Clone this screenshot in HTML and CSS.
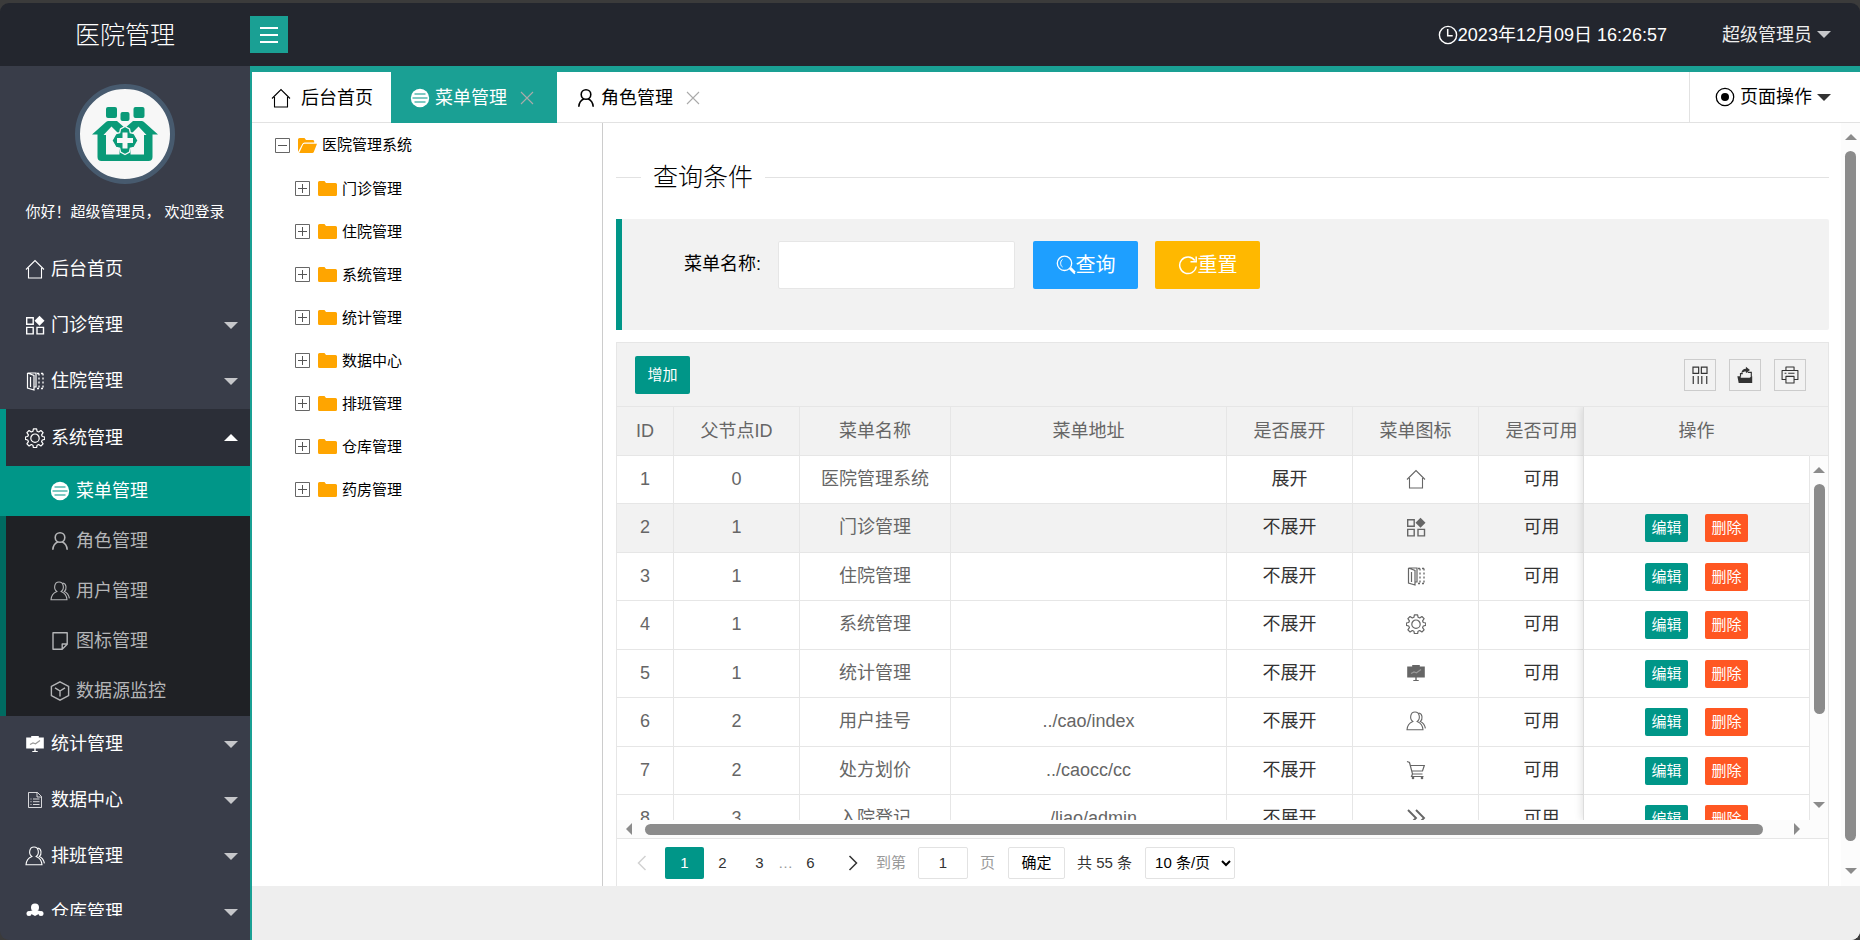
FILE: index.html
```html
<!DOCTYPE html>
<html lang="zh-CN">
<head>
<meta charset="utf-8">
<title>医院管理</title>
<link rel="stylesheet" href="styles.css">
</head>
<body>
<svg class="sprite" aria-hidden="true">
  <symbol id="i-home" viewBox="0 0 20 20"><path d="M1 10.5 10 1.5l9 9M3.500 9v10h13V9" fill="none" stroke="currentColor" stroke-width="1.100"/></symbol>
  <symbol id="i-grid" viewBox="0 0 20 20"><path d="M1.700 2.700h6.500v6.500H1.700zM1.700 12.400h6.500v6.500H1.700zM12 12.400h6.500v6.500H12z" fill="none" stroke="currentColor" stroke-width="1.400"/><path d="m14.500.8 5 5-5 5-5-5z" fill="currentColor"/></symbol>
  <symbol id="i-door" viewBox="0 0 20 20"><path d="M2.500 2h8.500v2.500M2.500 2v15l6.500 2V4.500L2.500 2M11 7v9H9M5.500 6v10M11 4.500v12" fill="none" stroke="currentColor" stroke-width="1.200"/><path d="M14 2.500v16M18 2.500v16M12 2.500h6M12 17.500h6" fill="none" stroke="currentColor" stroke-width="1.300" stroke-dasharray="2 2"/></symbol>
  <symbol id="i-gear" viewBox="0 0 20 20"><path d="M8.400.8h3.200l.5 2.500 1.600.7 2.200-1.500 2.200 2.200-1.500 2.200.7 1.600 2.400.5v2.400l-2.400.6-.7 1.600 1.500 2.200-2.200 2.200-2.200-1.500-1.600.7-.5 2.500H8.400l-.5-2.500-1.600-.7-2.200 1.500-2.200-2.200 1.500-2.200-.7-1.600-2.300-.6V9l2.300-.5.7-1.600L1.900 4.700l2.200-2.200L6.300 4l1.600-.7z" fill="none" stroke="currentColor" stroke-width="1.200" stroke-linejoin="round"/><circle cx="10" cy="10.200" r="4.200" fill="none" stroke="currentColor" stroke-width="1.200"/></symbol>
  <symbol id="i-menu" viewBox="0 0 20 20"><circle cx="10" cy="10" r="9.200" fill="currentColor"/><path d="M4.500 6h11M2.500 10h15M4.500 14h11" stroke="#009688" stroke-width="1.100"/></symbol>
  <symbol id="i-role" viewBox="0 0 20 20"><circle cx="10" cy="6.500" r="4.800" fill="none" stroke="currentColor" stroke-width="1.600"/><path d="M8 10.800c-3 1.400-5 4-5.200 8M12 10.800c3 1.400 5 4 5.200 8" fill="none" stroke="currentColor" stroke-width="1.600"/></symbol>
  <symbol id="i-user" viewBox="0 0 20 20"><path d="M6.800 10.400C3.400 8 4 1 9 1s5.600 7 2.200 9.400c3.200 1.400 5.600 4 5.800 8.400H1c.2-4.400 2.600-7 5.800-8.400zM12.800 2c4 .6 4 6.500 1.600 8.400 2.600 1.200 4.400 3.600 5 7" fill="none" stroke="currentColor" stroke-width="1.100"/></symbol>
  <symbol id="i-note" viewBox="0 0 20 20"><path d="M3 1.700h14.200v11.500l-5 5.100H3zM17 13h-4.800v5" fill="none" stroke="currentColor" stroke-width="1.400" stroke-linejoin="round"/></symbol>
  <symbol id="i-cube" viewBox="0 0 20 20"><path d="m10 .9 8.600 4.600v9L10 19.200 1.400 14.500v-9zM5 6.800l5 3.200 5-3.200M10 10v5.500" fill="none" stroke="currentColor" stroke-width="1.400"/></symbol>
  <symbol id="i-board" viewBox="0 0 20 20"><path d="M1.200 3.500h5V2h7.600v1.500h5v11H1.200zM9.300 14.500h1.400V17h2v1H7.300v-1h2z" fill="currentColor"/><path class="board-line" d="m5 10.500 3-1.500 2.500.8L15 6.500" fill="none" stroke-width="1.200"/></symbol>
  <symbol id="i-doc" viewBox="0 0 20 20"><path d="M3.500 2.500h9l4 4v11h-13zM12 2.500V7h4.500M5.500 9h1M8 9h6.500M5.500 11.700h1M8 11.700h6.500M5.500 14.500h1M8 14.500h6.500" fill="none" stroke="currentColor" stroke-width=".8"/></symbol>
  <symbol id="i-team" viewBox="0 0 20 20"><circle cx="10" cy="5.500" r="4" fill="currentColor"/><circle cx="4" cy="11.500" r="2.500" fill="currentColor"/><circle cx="16" cy="11.500" r="2.500" fill="currentColor"/><path d="M3.500 10.500c1-3 12-3 13 0L10 14zM.8 18c0-5 6-5 7 0zM12 18c1-5 7-5 7.200 0zM7.500 14.500h5V18h-5z" fill="currentColor"/></symbol>
  <symbol id="i-cart" viewBox="0 0 20 20"><path d="M1 1.500 3.500 2.500l3 11.500h10M4.300 5.500h14L16.500 11H6M6.500 14l-1 2.500h12" fill="none" stroke="currentColor" stroke-width="1.200"/><circle cx="7" cy="18" r="1.300" fill="currentColor"/><circle cx="16" cy="18" r="1.300" fill="currentColor"/></symbol>
  <symbol id="i-next" viewBox="0 0 20 20"><path d="m2 2 8 8-8 8M10 2l8 8-8 8" fill="none" stroke="currentColor" stroke-width="1.900"/></symbol>
  <symbol id="i-clock" viewBox="0 0 20 20"><circle cx="10" cy="10" r="8.600" fill="none" stroke="currentColor" stroke-width="1.400"/><path d="M9.700 4v6.700h5" fill="none" stroke="currentColor" stroke-width="1.500"/></symbol>
  <symbol id="i-target" viewBox="0 0 20 20"><circle cx="10" cy="10" r="8.700" fill="none" stroke="currentColor" stroke-width="1.300"/><circle cx="10" cy="10" r="4" fill="currentColor"/></symbol>
  <symbol id="i-search" viewBox="0 0 20 20"><circle cx="8.500" cy="8.300" r="7.200" fill="none" stroke="currentColor" stroke-width="1.300"/><path d="M6.500 4.500c-2.500 1.500-2.500 6 0 7.500" fill="none" stroke="currentColor"/><path d="m13.200 13.200 5.600 5.600M14.600 12.600l4.600 4.600" fill="none" stroke="currentColor" stroke-width="1.500"/></symbol>
  <symbol id="i-reset" viewBox="0 0 20 20"><path d="M18.200 11.500A8.300 8.300 0 1 1 16.800 5.500M18.200 1.500v5.300h-5.700" fill="none" stroke="currentColor" stroke-width="1.500"/></symbol>
  <symbol id="i-close" viewBox="0 0 14 14"><path d="m1 1 12 12M13 1 1 13" fill="none" stroke="currentColor" stroke-width="1.100"/></symbol>
  <symbol id="i-cols" viewBox="0 0 20 20"><path d="M2.200 1.200h6.300v7H2.200zM11.500 1.200h6.300v7h-6.300zM2.500 11v9M8 11v9M12 11v9M17.500 11v9" fill="none" stroke="currentColor" stroke-width="1.300"/></symbol>
  <symbol id="i-export" viewBox="0 0 20 20"><path d="M1.500 11.500h3l1 1.500h9.500l3-1.500v7.500H3z" fill="currentColor"/><path d="M5 12V8.500h2.500M13 7h4v6" fill="none" stroke="currentColor" stroke-width="1.300"/><path d="M6 8c0-3 2-5 5-5V.8l4.500 3.700L11 8V6C9 6 7.500 6.500 6 8z" fill="currentColor"/></symbol>
  <symbol id="i-print" viewBox="0 0 20 20"><path d="M5.500 5V1.200h9V5M5.500 15H1.200V5h17.600v10h-4.300M5.500 11.500h9v7.300h-9zM4 8h2M8 8h7" fill="none" stroke="currentColor" stroke-width="1.200" stroke-linejoin="round"/></symbol>
  <symbol id="i-plus" viewBox="0 0 15 15"><path d="M.5.500h14v14H.5z" fill="none" stroke="#666"/><path d="M3 7.500h9M7.500 3v9" stroke="#555"/></symbol>
  <symbol id="i-minus" viewBox="0 0 15 15"><path d="M.5.500h14v14H.5z" fill="none" stroke="#666"/><path d="M3 7.500h9" stroke="#555"/></symbol>
  <symbol id="i-folder" viewBox="0 0 19 15"><path d="M0 1.500Q0 0 1.500 0H6.500L8 2h9.500Q19 2 19 3.500v10q0 1.500-1.500 1.500h-16Q0 15 0 13.500z" fill="#ffa500"/></symbol>
  <symbol id="i-open" viewBox="0 0 19 15"><path d="M0 14V1.500Q0 0 1.500 0H6.500L8 2h7q1.200 0 1.200 1.500V4.500H6.500Q5 4.500 4.300 6z" fill="#ffa500"/><path d="M1.200 15 5 6.700q.4-1 1.500-1H19L15.800 14q-.4 1-1.500 1z" fill="#ffa500"/></symbol>
  <symbol id="i-left" viewBox="0 0 10 16"><path d="M8.500 1 1.500 8l7 7" fill="none" stroke="currentColor" stroke-width="1.500"/></symbol>
  <symbol id="i-right" viewBox="0 0 10 16"><path d="m1.500 1 7 7-7 7" fill="none" stroke="currentColor" stroke-width="1.500"/></symbol>
</svg>
<div class="app">
  <header class="header">
    <h1 class="logo">医院管理</h1>
    <button class="burger" type="button" aria-label="收起菜单"><span></span><span></span><span></span></button>
    <div class="clock"><svg class="icon"><use href="#i-clock"/></svg><time>2023年12月09日 16:26:57</time></div>
    <button class="account" type="button">超级管理员<span class="caret"></span></button>
  </header>
  <div class="body">
    <aside class="side">
      <div class="profile">
        <svg class="avatar" viewBox="0 0 100 100" role="img" aria-label="头像">
          <circle cx="50" cy="50" r="47.500" fill="#f7f7f7" stroke="#475a6e" stroke-width="5"/>
          <g fill="#0a9a78">
            <rect x="31" y="23" width="11" height="11" rx="2"/><rect x="58.500" y="23" width="11" height="11" rx="2"/><rect x="45.500" y="28" width="9" height="9" rx="2"/>
            <path d="M17 50.500 31 38q1-1 2.500-1H42l8 7 8-7h8.500q1.500 0 2.500 1l14 12.500h-5.500V73q0 4-4 4h-47q-4 0-4-4V50.500z"/>
          </g>
          <path d="M31 70.500V51h-2.500l8-8.500 7 7L38 56.500l6.500 7v7zM69 70.500V51h2.500l-8-8.500-7 7 5.500 7-6.500 7v7z" fill="#f7f7f7"/>
          <path d="m50 42.500 4.500 2.500.8 3.700 3.700.8 4 7-4 7-3.700.8-.8 3.700-4.500 2.500-4.500-2.500-.8-3.700-3.700-.8-4-7 4-7 3.700-.8.8-3.700z" fill="#0a9a78" stroke="#f7f7f7" stroke-width="1.300"/>
          <path d="M47.500 48.500h5V54H58v5h-5.500v5.500h-5V59H42v-5h5.500z" fill="#f7f7f7"/>
        </svg>
        <p class="greet">你好！超级管理员， 欢迎登录</p>
      </div>
      <nav class="nav">
        <a class="item" href="#"><svg class="icon"><use href="#i-home"/></svg>后台首页</a>
        <a class="item" href="#"><svg class="icon"><use href="#i-grid"/></svg>门诊管理<span class="caret"></span></a>
        <a class="item" href="#"><svg class="icon"><use href="#i-door"/></svg>住院管理<span class="caret"></span></a>
        <a class="item item-open" href="#"><svg class="icon"><use href="#i-gear"/></svg>系统管理<span class="caret caret-up"></span></a>
        <div class="sub">
          <a class="subitem subitem-on" href="#"><svg class="icon"><use href="#i-menu"/></svg>菜单管理</a>
          <a class="subitem" href="#"><svg class="icon"><use href="#i-role"/></svg>角色管理</a>
          <a class="subitem" href="#"><svg class="icon"><use href="#i-user"/></svg>用户管理</a>
          <a class="subitem" href="#"><svg class="icon"><use href="#i-note"/></svg>图标管理</a>
          <a class="subitem" href="#"><svg class="icon"><use href="#i-cube"/></svg>数据源监控</a>
        </div>
        <a class="item" href="#"><svg class="icon"><use href="#i-board"/></svg>统计管理<span class="caret"></span></a>
        <a class="item" href="#"><svg class="icon"><use href="#i-doc"/></svg>数据中心<span class="caret"></span></a>
        <a class="item" href="#"><svg class="icon"><use href="#i-user"/></svg>排班管理<span class="caret"></span></a>
        <a class="item" href="#"><svg class="icon"><use href="#i-team"/></svg>仓库管理<span class="caret"></span></a>
      </nav>
    </aside>
    <div class="work">
      <div class="tabs">
        <a class="tab tab-home" href="#"><svg class="icon"><use href="#i-home"/></svg>后台首页</a>
        <a class="tab tab-on" href="#"><svg class="icon"><use href="#i-menu"/></svg>菜单管理<svg class="close"><use href="#i-close"/></svg></a>
        <a class="tab" href="#"><svg class="icon"><use href="#i-role"/></svg>角色管理<svg class="close"><use href="#i-close"/></svg></a>
        <button class="page-ops" type="button"><svg class="icon"><use href="#i-target"/></svg>页面操作<span class="caret"></span></button>
      </div>
      <div class="frame">
        <ul class="tree">
          <li class="node node-root"><svg class="toggle"><use href="#i-minus"/></svg><svg class="folder"><use href="#i-open"/></svg>医院管理系统</li>
          <li class="node"><svg class="toggle"><use href="#i-plus"/></svg><svg class="folder"><use href="#i-folder"/></svg>门诊管理</li>
          <li class="node"><svg class="toggle"><use href="#i-plus"/></svg><svg class="folder"><use href="#i-folder"/></svg>住院管理</li>
          <li class="node"><svg class="toggle"><use href="#i-plus"/></svg><svg class="folder"><use href="#i-folder"/></svg>系统管理</li>
          <li class="node"><svg class="toggle"><use href="#i-plus"/></svg><svg class="folder"><use href="#i-folder"/></svg>统计管理</li>
          <li class="node"><svg class="toggle"><use href="#i-plus"/></svg><svg class="folder"><use href="#i-folder"/></svg>数据中心</li>
          <li class="node"><svg class="toggle"><use href="#i-plus"/></svg><svg class="folder"><use href="#i-folder"/></svg>排班管理</li>
          <li class="node"><svg class="toggle"><use href="#i-plus"/></svg><svg class="folder"><use href="#i-folder"/></svg>仓库管理</li>
          <li class="node"><svg class="toggle"><use href="#i-plus"/></svg><svg class="folder"><use href="#i-folder"/></svg>药房管理</li>
        </ul>
        <main class="content">
          <fieldset class="title"><legend>查询条件</legend></fieldset>
          <form class="query">
            <label for="menu-name">菜单名称:</label>
            <input id="menu-name" class="field" type="text">
            <button class="btn btn-blue" type="button"><svg class="icon"><use href="#i-search"/></svg>查询</button>
            <button class="btn btn-amber" type="reset"><svg class="icon"><use href="#i-reset"/></svg>重置</button>
          </form>
          <section class="grid">
            <div class="toolbar">
              <button class="add" type="button">增加</button>
              <button class="tool" type="button" aria-label="筛选列"><svg><use href="#i-cols"/></svg></button>
              <button class="tool" type="button" aria-label="导出"><svg><use href="#i-export"/></svg></button>
              <button class="tool" type="button" aria-label="打印"><svg><use href="#i-print"/></svg></button>
            </div>
            <div class="sheet">
              <div class="scroll">
                <table class="data">
                  <colgroup><col class="c-id"><col class="c-mid"><col class="c-name"><col><col class="c-mid"><col class="c-mid"><col class="c-mid"></colgroup>
                  <thead><tr><th>ID</th><th>父节点ID</th><th>菜单名称</th><th>菜单地址</th><th>是否展开</th><th>菜单图标</th><th>是否可用</th></tr></thead>
                  <tbody>
                    <tr><td>1</td><td>0</td><td>医院管理系统</td><td></td><td class="dark">展开</td><td><svg class="icon"><use href="#i-home"/></svg></td><td class="dark">可用</td></tr>
                    <tr class="hover"><td>2</td><td>1</td><td>门诊管理</td><td></td><td class="dark">不展开</td><td><svg class="icon"><use href="#i-grid"/></svg></td><td class="dark">可用</td></tr>
                    <tr><td>3</td><td>1</td><td>住院管理</td><td></td><td class="dark">不展开</td><td><svg class="icon"><use href="#i-door"/></svg></td><td class="dark">可用</td></tr>
                    <tr><td>4</td><td>1</td><td>系统管理</td><td></td><td class="dark">不展开</td><td><svg class="icon"><use href="#i-gear"/></svg></td><td class="dark">可用</td></tr>
                    <tr><td>5</td><td>1</td><td>统计管理</td><td></td><td class="dark">不展开</td><td><svg class="icon"><use href="#i-board"/></svg></td><td class="dark">可用</td></tr>
                    <tr><td>6</td><td>2</td><td>用户挂号</td><td>../cao/index</td><td class="dark">不展开</td><td><svg class="icon"><use href="#i-user"/></svg></td><td class="dark">可用</td></tr>
                    <tr><td>7</td><td>2</td><td>处方划价</td><td>../caocc/cc</td><td class="dark">不展开</td><td><svg class="icon"><use href="#i-cart"/></svg></td><td class="dark">可用</td></tr>
                    <tr><td>8</td><td>3</td><td>入院登记</td><td>../liao/admin</td><td class="dark">不展开</td><td><svg class="icon"><use href="#i-next"/></svg></td><td class="dark">可用</td></tr>
                  </tbody>
                </table>
              </div>
              <div class="pinned">
                <table class="data">
                  <thead><tr><th>操作</th></tr></thead>
                  <tbody>
                    <tr><td></td></tr>
                    <tr class="hover"><td><div class="acts"><button class="edit" type="button">编辑</button><button class="del" type="button">删除</button></div></td></tr>
                    <tr><td><div class="acts"><button class="edit" type="button">编辑</button><button class="del" type="button">删除</button></div></td></tr>
                    <tr><td><div class="acts"><button class="edit" type="button">编辑</button><button class="del" type="button">删除</button></div></td></tr>
                    <tr><td><div class="acts"><button class="edit" type="button">编辑</button><button class="del" type="button">删除</button></div></td></tr>
                    <tr><td><div class="acts"><button class="edit" type="button">编辑</button><button class="del" type="button">删除</button></div></td></tr>
                    <tr><td><div class="acts"><button class="edit" type="button">编辑</button><button class="del" type="button">删除</button></div></td></tr>
                    <tr><td><div class="acts"><button class="edit" type="button">编辑</button><button class="del" type="button">删除</button></div></td></tr>
                  </tbody>
                </table>
              </div>
              <div class="rail">
                <div class="rail-head"></div>
                <div class="vbar"><i class="up"></i><span class="thumb thumb-part"></span><span class="rest"></span><i class="down"></i></div>
              </div>
            </div>
            <div class="hbar"><i class="left"></i><span class="hthumb"></span><i class="right"></i></div>
            <div class="pager">
              <button class="turn turn-off" type="button" aria-label="上一页"><svg><use href="#i-left"/></svg></button>
              <a class="page page-on" href="#">1</a>
              <a class="page" href="#">2</a>
              <a class="page" href="#">3</a>
              <span class="dots">…</span>
              <a class="page" href="#">6</a>
              <button class="turn" type="button" aria-label="下一页"><svg><use href="#i-right"/></svg></button>
              <label class="muted" for="goto">到第</label>
              <input id="goto" class="goto" type="text" value="1">
              <span class="muted">页</span>
              <button class="confirm" type="button">确定</button>
              <span class="total">共 55 条</span>
              <select class="limit" aria-label="每页条数"><option>10 条/页</option></select>
            </div>
          </section>
        </main>
        <div class="vbar vbar-page"><i class="up"></i><span class="thumb"></span><i class="down"></i></div>
      </div>
      <footer class="foot"></footer>
    </div>
  </div>
</div>
</body>
</html>
```
FILE: styles.css
```css
* { box-sizing: border-box; }
body {
  margin: 0;
  background: #3b3b3b;
  color: #000;
  font: 400 18px/24px "Liberation Sans", "Noto Sans CJK SC", sans-serif;
}
a { color: inherit; text-decoration: none; }
button, input, select { font: inherit; color: inherit; margin: 0; }
button { border: 0; padding: 0; background: none; }
.sprite { position: absolute; width: 0; height: 0; }
.icon { width: 20px; height: 20px; flex: none; }
.board-line { stroke: #999; }

.app { height: 100vh; display: flex; flex-direction: column; border-top: 3px solid #3b3b3b; overflow: hidden; }
.header {
  flex: none; height: 63px; display: flex; align-items: center;
  background: #23262e; color: #fff; border-radius: 9px 9px 0 0; padding-right: 29px;
}
.logo { margin: 0; width: 250px; text-align: center; font-size: 25px; font-weight: 300; }
.burger {
  width: 38px; height: 37px; background: #1aa094;
  display: flex; flex-direction: column; align-items: center; justify-content: center; gap: 5px;
}
.burger span { width: 18px; height: 2px; background: #fff; }
.clock { margin-left: auto; display: flex; align-items: center; }
.account { margin-left: 55px; display: flex; align-items: center; gap: 5px; color: #eee; }
.caret { width: 14px; border: 7px solid transparent; border-top-color: #c6c7ca; border-bottom: 0; }

.body { flex: 1; min-height: 0; display: flex; }
.side {
  width: 250px; flex: none; display: flex; flex-direction: column;
  background: #393d49; color: #fff; padding-bottom: 24px; border-radius: 0 0 0 9px;
}
.profile { flex: none; height: 175px; padding-top: 18px; text-align: center; }
.avatar { width: 100px; height: 100px; display: block; margin: 0 auto 16px; }
.greet { margin: 0; font-size: 15px; }
.nav { flex: 1; min-height: 0; overflow: hidden; }
.item { height: 56px; display: flex; align-items: center; gap: 6px; padding: 0 12px 0 25px; }
.item .caret { margin-left: auto; }
.caret-up { transform: rotate(180deg); }
.item .caret-up { border-top-color: #fff; }
.item-open { height: 57px; background: #2b2e37; border-left: 6px solid #009688; padding-left: 19px; }
.sub { background: #1f2125; border-left: 6px solid #006b61; }
.subitem { height: 50px; display: flex; align-items: center; gap: 6px; padding-left: 44px; color: #b4b5b7; }
.subitem-on { background: #009688; color: #fff; margin-left: -6px; padding-left: 50px; }

.work {
  flex: 1; min-width: 0; display: flex; flex-direction: column;
  border-left: 2px solid #1aa094; border-top: 6px solid #1aa094; background: #fff;
  border-bottom-right-radius: 9px; overflow: hidden;
}
.tabs { flex: none; height: 51px; display: flex; border-bottom: 1px solid #e2e2e2; }
.tab { height: 51px; display: flex; align-items: center; gap: 5px; padding: 0 23px 0 19px; }
.tab-home { gap: 10px; padding-right: 18px; }
.tab-on { background: #1aa094; color: #fff; }
.close { width: 14px; height: 14px; margin-left: 8px; color: #aaa; }
.page-ops {
  margin-left: auto; width: 171px; border-left: 1px solid #e2e2e2;
  display: flex; align-items: center; padding-left: 25px; gap: 5px;
}
.page-ops .caret { border-top-color: #333; }

.frame { flex: 1; min-height: 0; display: flex; }
.tree { flex: none; width: 351px; margin: 0; padding: 0; list-style: none; border-right: 1px solid #ccc; font-size: 15px; }
.node { height: 43px; display: flex; align-items: center; padding-left: 43px; }
.node-root { height: 44px; padding-left: 23px; }
.toggle { width: 15px; height: 15px; margin-right: 8px; }
.folder { width: 19px; height: 15px; margin-right: 5px; }

.content { flex: 1; min-width: 0; display: flex; flex-direction: column; padding: 38px 12px 0 13px; }
.title { flex: none; height: 58px; margin: 0; padding: 0; min-width: 0; border: 0 solid #e2e2e2; border-top-width: 1px; }
.title legend { margin-left: 25px; padding: 0 12px; font-size: 25px; font-weight: 300; line-height: 32px; }
.query {
  flex: none; height: 111px; display: flex; align-items: flex-start;
  margin-bottom: 12px; padding: 22px 0 0 62px;
  background: #f2f2f2; border-left: 6px solid #009688; border-radius: 0 2px 2px 0;
}
.query label { width: 94px; line-height: 46px; }
.field { width: 237px; height: 48px; border: 1px solid #e6e6e6; border-radius: 2px; background: #fff; margin-right: 18px; padding: 0 12px; }
.btn {
  width: 105px; height: 48px; margin-right: 17px; border-radius: 2px; color: #fff; font-size: 20px;
  display: flex; align-items: center; justify-content: center;
}
.btn-blue { background: #1e9fff; }
.btn-amber { background: #ffb800; }

.grid { flex: 1; min-height: 0; display: flex; flex-direction: column; border: 1px solid #e6e6e6; border-bottom: 0; }
.toolbar {
  flex: none; height: 64px; display: flex; align-items: center; gap: 13px;
  padding: 0 22px 0 18px; background: #f2f2f2; border-bottom: 1px solid #e6e6e6;
}
.add { width: 55px; height: 38px; margin-right: auto; border-radius: 2px; background: #009688; color: #fff; font-size: 15px; }
.tool { width: 32px; height: 32px; border: 1px solid #ccc; color: #333; display: grid; place-items: center; }
.tool svg { width: 18px; height: 18px; }

.sheet { flex: 1; min-height: 0; display: flex; overflow: hidden; }
.scroll { flex: 1; min-width: 0; overflow: hidden; }
.data { border-spacing: 0; table-layout: fixed; width: 100%; color: #666; text-align: center; }
.scroll .data { width: calc(100% + 22px); }
.c-id { width: 57px; }
.c-mid { width: 126px; }
.c-name { width: 151px; }
.data th, .data td { padding: 0; border: 0 solid #e6e6e6; border-width: 0 1px 1px 0; height: 48px; font-weight: 400; }
.data td { padding-bottom: 2px; }
.data th { background: #f2f2f2; height: 49px; }
.data tr:nth-child(even) td { height: 49px; }
.data .icon { display: block; margin: 0 auto; }
.data .dark { color: #333; }
.hover { background: #f2f2f2; }
.data .board-line { stroke: #fff; }
.pinned { flex: none; width: 227px; position: relative; z-index: 1; background: #fff; border-left: 1px solid #ddd; box-shadow: -1px 0 8px rgba(0, 0, 0, .12); }
.pinned th { border-right-color: #f2f2f2; }
.acts { display: flex; justify-content: center; gap: 17px; padding-top: 2px; }
.edit, .del { width: 43px; height: 28px; border-radius: 2px; color: #fff; font-size: 15px; }
.edit { background: #009688; }
.del { background: #ff5722; }

.rail { flex: none; width: 18px; display: flex; flex-direction: column; position: relative; z-index: 2; }
.rail-head { height: 49px; background: #f2f2f2; border-bottom: 1px solid #e6e6e6; }
.vbar { flex: 1; display: flex; flex-direction: column; align-items: center; padding: 11px 0 12px; background: #fcfcfc; }
.vbar-page { flex: none; width: 19px; }
.up, .down, .left, .right { border: 6px solid transparent; }
.up { border-top: 0; border-bottom-color: #8b8b8b; margin-bottom: 11px; }
.down { border-bottom: 0; border-top-color: #8b8b8b; margin-top: 11px; }
.vbar-page .down { margin-top: 27px; }
.left { border-left: 0; border-right-color: #8b8b8b; margin-right: 13px; }
.right { border-right: 0; border-left-color: #8b8b8b; }
.thumb { flex: 1; width: 11px; border-radius: 6px; background: #8b8b8b; }
.thumb-part { flex: 3; }
.rest { flex: 1; }
.hbar { flex: none; height: 19px; display: flex; align-items: center; padding: 0 28px 0 9px; background: #fcfcfc; border-bottom: 1px solid #e6e6e6; }
.hthumb { flex: 1; height: 11px; border-radius: 6px; background: #8b8b8b; margin-right: 31px; }

.pager { flex: none; height: 47px; display: flex; align-items: center; padding: 3px 0 3px 11px; font-size: 15px; color: #333; }
.turn { width: 28px; height: 32px; display: grid; place-items: center; margin-right: 9px; }
.turn svg { width: 10px; height: 16px; }
.turn-off { color: #d2d2d2; }
.page { width: 37px; text-align: center; line-height: 32px; }
.page-on { width: 39px; border-radius: 2px; background: #009688; color: #fff; }
.dots { width: 14px; text-align: center; color: #999; }
.dots + .page { margin-right: 10px; }
.muted { color: #999; }
.goto { width: 50px; height: 32px; margin: 0 12px; text-align: center; border: 1px solid #e2e2e2; border-radius: 2px; padding: 0; }
.confirm { width: 57px; height: 32px; margin: 0 12px 0 13px; border: 1px solid #e2e2e2; border-radius: 2px; color: #000; }
.total { margin-right: 13px; }
.limit { height: 32px; width: 90px; border: 1px solid #e2e2e2; border-radius: 2px; background: #fff; padding: 0 0 0 5px; color: #000; }
.foot { flex: none; height: 54px; background: #eee; }
```
